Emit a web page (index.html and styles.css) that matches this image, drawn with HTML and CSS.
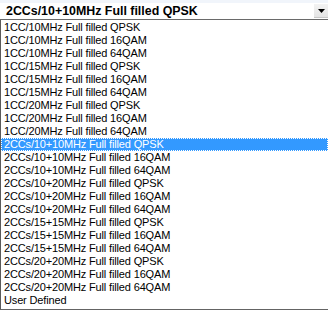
FILE: index.html
```html
<!DOCTYPE html>
<html>
<head>
<meta charset="utf-8">
<link rel="stylesheet" href="styles.css">
</head>
<body>
<div class="combo">
  <div class="combo-head">
    <span class="combo-value">2CCs/10+10MHz Full filled QPSK</span>
    <span class="combo-btn"><svg width="7" height="4" viewBox="0 0 7 4"><path d="M0 0h7L3.5 4z" fill="#000"/></svg></span>
  </div>
  <ul class="list">
    <li>1CC/10MHz Full filled QPSK</li>
    <li>1CC/10MHz Full filled 16QAM</li>
    <li>1CC/10MHz Full filled 64QAM</li>
    <li>1CC/15MHz Full filled QPSK</li>
    <li>1CC/15MHz Full filled 16QAM</li>
    <li>1CC/15MHz Full filled 64QAM</li>
    <li>1CC/20MHz Full filled QPSK</li>
    <li>1CC/20MHz Full filled 16QAM</li>
    <li>1CC/20MHz Full filled 64QAM</li>
    <li class="sel">2CCs/10+10MHz Full filled QPSK</li>
    <li>2CCs/10+10MHz Full filled 16QAM</li>
    <li>2CCs/10+10MHz Full filled 64QAM</li>
    <li>2CCs/10+20MHz Full filled QPSK</li>
    <li>2CCs/10+20MHz Full filled 16QAM</li>
    <li>2CCs/10+20MHz Full filled 64QAM</li>
    <li>2CCs/15+15MHz Full filled QPSK</li>
    <li>2CCs/15+15MHz Full filled 16QAM</li>
    <li>2CCs/15+15MHz Full filled 64QAM</li>
    <li>2CCs/20+20MHz Full filled QPSK</li>
    <li>2CCs/20+20MHz Full filled 16QAM</li>
    <li>2CCs/20+20MHz Full filled 64QAM</li>
    <li>User Defined</li>
  </ul>
</div>
</body>
</html>
```
FILE: styles.css
```css
html, body {
  margin: 0;
  padding: 0;
  background: #fff;
}
.combo {
  width: 328px;
  height: 311px;
  overflow: hidden;
  font-family: "Liberation Sans", Arial, sans-serif;
}
.combo-head {
  height: 20px;
  box-sizing: border-box;
  display: flex;
  align-items: center;
  background: linear-gradient(#f1f5fb 0, #f1f5fb 3px, #fff 3px);
  border-bottom: 1px solid #6a6a6a;
}
.combo-value {
  flex: 1;
  padding: 3px 0 0 6px;
  font-weight: bold;
  font-size: 12.4px;
  line-height: 14px;
  color: #000;
}
.combo-btn {
  align-self: flex-start;
  margin-top: 4px;
  width: 14px;
  height: 13px;
  display: flex;
  align-items: center;
  justify-content: center;
  background: linear-gradient(#f3f3f3, #e4e4e4);
  border-bottom: 1px solid #c8c8c8;
}
.list {
  list-style: none;
  margin: 0;
  padding: 1px 0 0 0;
  height: 288px;
  border-left: 1px solid #5a5a5a;
  border-bottom: 1px solid #646464;
  box-sizing: content-box;
}
.list li {
  height: 13px;
  line-height: 13px;
  padding-left: 3px;
  font-size: 11px;
  letter-spacing: -0.15px;
  color: #000;
  white-space: nowrap;
  box-sizing: border-box;
}
.list li.sel {
  background: #3399ff;
  color: #fff;
  outline: 1px dotted #fff;
  outline-offset: -1px;
}
```
